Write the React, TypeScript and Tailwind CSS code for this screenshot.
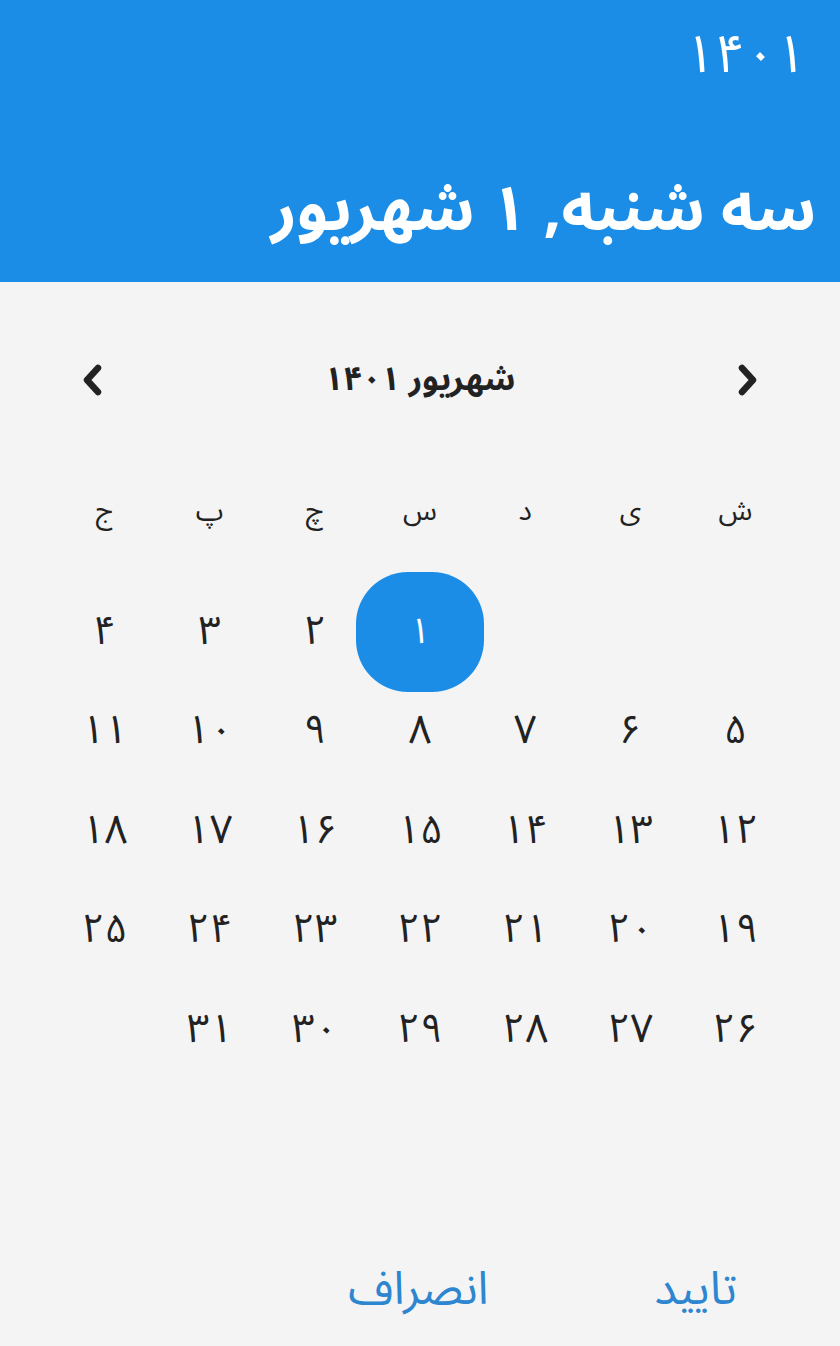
const weekdays = ['ش', 'ی', 'د', 'س', 'چ', 'پ', 'ج'];

const toFa = (n: number) => String(n).replace(/\d/g, (d) => '۰۱۲۳۴۵۶۷۸۹'[Number(d)]);

function Chevron({ dir }: { dir: 'left' | 'right' }) {
  return (
    <svg width="26" height="36" viewBox="0 0 26 36" fill="none">
      <path
        d={dir === 'left' ? 'M19 6 L8 18 L19 30' : 'M7 6 L18 18 L7 30'}
        stroke="#222"
        strokeWidth="6.5"
        strokeLinecap="round"
        strokeLinejoin="round"
      />
    </svg>
  );
}

export default function App() {
  const cells: (number | null)[] = [null, null, null];
  for (let d = 1; d <= 31; d++) cells.push(d);

  return (
    <div
      dir="rtl"
      className="w-[840px] h-[1346px] bg-[#f4f4f4] flex flex-col text-[#222]"
      style={{ fontFamily: '"Noto Sans Arabic", "Noto Naskh Arabic", "DejaVu Sans", sans-serif' }}
    >
      <div className="h-[282px] bg-[#1b8de6] text-white flex flex-col px-[24px] pt-[20px]">
        <div className="text-[53px] leading-[70px] pr-[10px]">{toFa(1401)}</div>
        <div className="mt-[80px] text-[63px] font-bold leading-[80px] tracking-[-0.5px]">سه شنبه, ۱ شهریور</div>
      </div>

      <div className="flex items-center justify-between px-[79px] mt-[80px] h-[36px]">
        <Chevron dir="right" />
        <div className="text-[33px] font-bold">شهریور {toFa(1401)}</div>
        <Chevron dir="left" />
      </div>

      <div className="grid grid-cols-7 px-[52px] mt-[92px] w-[840px]">
        {weekdays.map((w) => (
          <div key={w} className="h-[44px] flex items-center justify-center text-[28px]">
            {w}
          </div>
        ))}
      </div>

      <div className="grid grid-cols-7 px-[52px] mt-[48px] w-[840px]">
        {cells.map((d, i) => (
          <div key={i} className="h-[99.5px] flex items-center justify-center">
            {d === 1 ? (
              <div className="w-[128px] h-[120px] shrink-0 rounded-[52px] bg-[#1b8de6] text-white flex items-center justify-center text-[36px]">
                {toFa(d)}
              </div>
            ) : d ? (
              <span className="text-[40px] leading-[50px]">{toFa(d)}</span>
            ) : null}
          </div>
        ))}
      </div>

      <div className="mt-auto mb-[24px] flex pr-[103px] gap-[166px] text-[#2f86d0] text-[46px]">
        <button className="leading-[64px]">تایید</button>
        <button className="leading-[64px]">انصراف</button>
      </div>
    </div>
  );
}
